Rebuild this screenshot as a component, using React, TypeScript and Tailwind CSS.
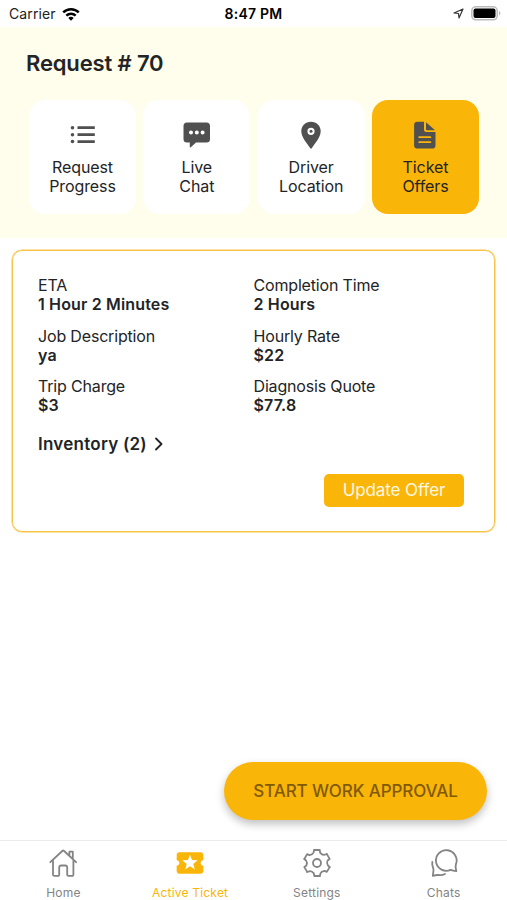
import { useState } from 'react';
import type { ReactNode } from 'react';
import { MdLocalActivity } from 'react-icons/md';

interface Item {
  label: string;
  icon: ReactNode;
}

interface Detail {
  title: string;
  value: string;
}

const actions: Item[] = [
  {
    label: 'Request Progress',
    icon: (
      <svg width="28" height="28" viewBox="0 0 28 28" fill="currentColor">
        <circle cx="3.500" cy="6.700" r="1.800" />
        <circle cx="3.500" cy="13.700" r="1.800" />
        <circle cx="3.500" cy="20.500" r="1.800" />
        <path d="M8.500 5.300h17.300v2.700H8.500zM8.500 12.300h17.300V15H8.500zM8.500 19.200h17.300v2.700H8.500z" />
      </svg>
    ),
  },
  {
    label: 'Live Chat',
    icon: (
      <svg width="28" height="28" viewBox="0 0 28 28" fill="currentColor">
        <path fillRule="evenodd" d="M4 1.500h19.500a3.500 3.500 0 0 1 3.500 3.500v13a3.500 3.500 0 0 1-3.500 3.500H13L7.800 26.300a.6.6 0 0 1-1-.5V21.500H4A3.500 3.500 0 0 1 .5 18V5A3.500 3.500 0 0 1 4 1.500zM8 9.600a2 2 0 1 0 0 4 2 2 0 0 0 0-4zm5.800 0a2 2 0 1 0 0 4 2 2 0 0 0 0-4zm5.800 0a2 2 0 1 0 0 4 2 2 0 0 0 0-4z" />
      </svg>
    ),
  },
  {
    label: 'Driver Location',
    icon: (
      <svg width="28" height="28" viewBox="0 0 28 28" fill="currentColor">
        <path fillRule="evenodd" d="M14 .8c5.500 0 9.700 4.100 9.700 9.300 0 6.500-5.800 12.400-8.800 16.900a1.100 1.100 0 0 1-1.800 0c-3-4.500-8.800-10.400-8.800-16.900C4.300 4.900 8.500.8 14 .8zm0 5.900a3.600 3.600 0 1 0 0 7.200 3.600 3.600 0 0 0 0-7.200z" />
        <circle cx="14" cy="10.300" r="1.500" />
      </svg>
    ),
  },
  {
    label: 'Ticket Offers',
    icon: (
      <svg width="28" height="28" viewBox="0 0 28 28" fill="currentColor">
        <path fillRule="evenodd" d="M6.500.8H13v7.700a2.500 2.500 0 0 0 2.500 2.500h9v13.200a3.400 3.400 0 0 1-3.400 3.400H6.500a3.400 3.400 0 0 1-3.400-3.400v-20A3.400 3.400 0 0 1 6.500.8zM8.300 15.200a.9.9 0 0 0 0 1.900h11a.9.9 0 0 0 0-1.900zm0 5a.9.9 0 0 0 0 1.900h11a.9.9 0 0 0 0-1.900z" />
        <path d="M15 1.200 24 9.300h-8a1 1 0 0 1-1-1z" />
      </svg>
    ),
  },
];

const details: Detail[] = [
  { title: 'ETA', value: '1 Hour 2 Minutes' },
  { title: 'Completion Time', value: '2 Hours' },
  { title: 'Job Description', value: 'ya' },
  { title: 'Hourly Rate', value: '$22' },
  { title: 'Trip Charge', value: '$3' },
  { title: 'Diagnosis Quote', value: '$77.8' },
];

const HomeIcon = () => (
  <svg width="30" height="30" viewBox="0 0 30 30" fill="none" stroke="currentColor" strokeWidth="1.800" strokeLinecap="round" strokeLinejoin="round">
    <path d="M2.300 14.200 14.300 3a1.300 1.300 0 0 1 1.800 0l12 11.200M5 12.200v14.300a1.400 1.400 0 0 0 1.400 1.400H10a1.200 1.200 0 0 0 1.200-1.200v-7.200a2 2 0 0 1 2-2h4a2 2 0 0 1 2 2v7.200a1.200 1.200 0 0 0 1.200 1.200H24a1.400 1.400 0 0 0 1.400-1.400V12.200M21.400 7.500V3.700h3.400v7" />
  </svg>
);

const GearIcon = () => (
  <svg width="30" height="30" viewBox="0 0 30 30" fill="none" stroke="currentColor" strokeWidth="1.800" strokeLinecap="round" strokeLinejoin="round">
    {[0, 60, 120, 180, 240, 300].map((angle) => (
      <path key={angle} transform={`rotate(${angle} 15 15)`} d="M12.200 2h5.600l.3 2.600q2.100 2.500 4.250 2.150L24.860 6.080" />
    ))}
    <circle cx="15" cy="15" r="4" />
  </svg>
);

const ChatsIcon = () => (
  <svg width="30" height="30" viewBox="0 0 30 30" fill="none" stroke="currentColor" strokeWidth="1.800" strokeLinecap="round" strokeLinejoin="round">
    <path d="M21.600 21.900A10.330 10.330 0 1 1 26.900 16.300Q26 18.500 27.300 23.200 24 22.900 21.600 21.900z" />
    <path d="M3.300 14q-.5 3.500 1 6.500.5 1.500-.5 7.300 3.300-.9 5.400-.8 3.800.6 6.800-1" />
  </svg>
);

const tabs: Item[] = [
  { label: 'Home', icon: <HomeIcon /> },
  { label: 'Active Ticket', icon: <MdLocalActivity size={32} /> },
  { label: 'Settings', icon: <GearIcon /> },
  { label: 'Chats', icon: <ChatsIcon /> },
];

const App = () => {
  const [action, setAction] = useState('Ticket Offers');
  const [tab, setTab] = useState('Active Ticket');

  return (
    <div className="flex h-[900px] w-[507px] flex-col overflow-hidden bg-white font-['Inter',sans-serif] text-[#222426]">
      <div className="grid h-[27px] shrink-0 grid-cols-3 items-center text-sm text-black">
        <div className="flex items-center gap-1.5 pl-[9px]">
          <span className="tracking-[0.1px] text-[#222]">Carrier</span>
          <svg width="18" height="14" viewBox="0 0 18 14">
            <path d="M1.200 5.400a11.200 11.200 0 0 1 15.600 0M4.300 8.600a6.800 6.800 0 0 1 9.400 0" fill="none" stroke="currentColor" strokeWidth="2.400" />
            <path d="M9 13.700 6.300 11a3.900 3.900 0 0 1 5.400 0z" />
          </svg>
        </div>
        <div className="text-center font-semibold tracking-[0.25px]">8:47 PM</div>
        <div className="flex items-center justify-end gap-[7px] pr-[5px]">
          <svg width="11" height="11" viewBox="0 0 11 11" fill="none" stroke="#333" strokeWidth="1.200" strokeLinejoin="round">
            <path d="M10 1 1 5l4.500.5L6 10z" />
          </svg>
          <svg width="31" height="15" viewBox="0 0 31 15">
            <rect x="0.800" y="0.800" width="25.400" height="13" rx="4" fill="#fff" stroke="#bbb" strokeWidth="1.500" />
            <rect x="2.500" y="2.500" width="22" height="9.600" rx="2" />
            <path d="M28 5q3 2.200 0 4.400z" fill="#bbb" />
          </svg>
        </div>
      </div>

      <div className="h-[211px] shrink-0 bg-[#fffdeb] px-[26px] pt-5">
        <h1 className="text-[22px] leading-8 font-semibold tracking-[-0.15px]">Request # 70</h1>
        <div className="mt-[21px] flex justify-between pr-0.5 pl-[3px]">
          {actions.map((item) => (
            <button
              key={item.label}
              onClick={() => setAction(item.label)}
              className={`flex h-[114px] w-[107px] flex-col items-center rounded-2xl pt-[21px] ${action === item.label ? 'bg-[#fab509]' : 'bg-white'}`}
            >
              <span className="text-[#505050]">{item.icon}</span>
              <span className="mt-[9px] w-17 text-base leading-[19px] tracking-[-0.1px]">{item.label}</span>
            </button>
          ))}
        </div>
      </div>

      <div className="mx-3 mt-3 h-[282px] shrink-0 rounded-[10px] border border-[#f7c348] px-[25px] pt-[25px] shadow-[0_0_0_0.5px_#f7c348]">
        <div className="grid grid-cols-2 gap-y-3">
          {details.map((detail) => (
            <div key={detail.title} className="text-base leading-[19.300px]">
              <div className="tracking-[-0.17px]">{detail.title}</div>
              <div className="font-semibold tracking-[0.15px]">{detail.value}</div>
            </div>
          ))}
        </div>
        <button className="mt-[18px] flex items-center gap-2 text-[17px] leading-5 font-semibold tracking-[0.25px]">
          Inventory (2)
          <svg width="8" height="14" viewBox="0 0 8 14" fill="none" stroke="currentColor" strokeWidth="1.800" strokeLinecap="round" strokeLinejoin="round">
            <path d="m1 1.500 5.500 5.500L1 12.500" />
          </svg>
        </button>
        <div className="mt-5 flex justify-end pr-[5px]">
          <button className="h-[33px] w-[140px] rounded-[5px] bg-[#fab509] text-[17px] tracking-[-0.1px] text-[#fff8e1]">Update Offer</button>
        </div>
      </div>

      <div className="flex flex-1 items-end justify-end pr-5 pb-5">
        <button className="h-[58px] w-[263px] rounded-full bg-[#fab509] pt-0.5 text-[17px] font-medium tracking-[-0.1px] text-[#805a05] shadow-[0_4px_8px_rgba(0,0,0,0.250)]">
          START WORK APPROVAL
        </button>
      </div>

      <div className="grid h-[60px] shrink-0 grid-cols-4 border-t border-[#ececec]">
        {tabs.map((item) => (
          <button
            key={item.label}
            onClick={() => setTab(item.label)}
            className={`flex flex-col items-center ${tab === item.label ? 'text-[#fab509]' : 'text-[#848484]'}`}
          >
            <span className="flex h-11 items-center">{item.icon}</span>
            <span className="text-xs leading-4 tracking-[0.2px]">{item.label}</span>
          </button>
        ))}
      </div>
    </div>
  );
};

export default App;
